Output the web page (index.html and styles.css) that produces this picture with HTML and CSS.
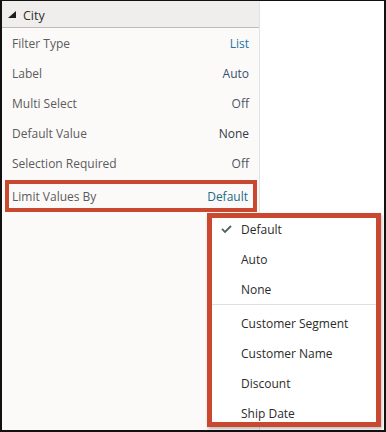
FILE: index.html
```html
<!DOCTYPE html>
<html lang="en">
<head>
<meta charset="utf-8">
<title>City filter properties</title>
<link rel="stylesheet" href="styles.css">
</head>
<body>
<div class="frame">
  <aside class="panel">
    <div class="panel-head">
      <svg class="tri" width="8" height="7" viewBox="0 0 8 7" aria-hidden="true"><polygon points="8,0 8,7 0,7"/></svg>
      <span class="panel-title">City</span>
    </div>
    <div class="props">
      <div class="prop"><span class="key">Filter Type</span><span class="val val-list">List</span></div>
      <div class="prop"><span class="key">Label</span><span class="val val-auto">Auto</span></div>
      <div class="prop"><span class="key">Multi Select</span><span class="val val-off">Off</span></div>
      <div class="prop"><span class="key">Default Value</span><span class="val val-none">None</span></div>
      <div class="prop"><span class="key">Selection Required</span><span class="val val-off">Off</span></div>
      <div class="prop prop-hl"><span class="key">Limit Values By</span><span class="val val-default">Default</span></div>
    </div>
  </aside>
  <div class="menu">
    <ul class="menu-list">
      <li class="item"><span class="mark"><svg width="11" height="8" viewBox="0 0 11 8" aria-hidden="true"><polyline points="1,3.8 4,7 10,1"/></svg></span>Default</li>
      <li class="item"><span class="mark"></span>Auto</li>
      <li class="item"><span class="mark"></span>None</li>
      <li class="sep" role="separator"></li>
      <li class="item"><span class="mark"></span>Customer Segment</li>
      <li class="item"><span class="mark"></span>Customer Name</li>
      <li class="item"><span class="mark"></span>Discount</li>
      <li class="item"><span class="mark"></span>Ship Date</li>
    </ul>
  </div>
</div>
</body>
</html>
```

FILE: styles.css
```css
* { box-sizing: border-box; }

html, body {
  margin: 0;
  padding: 0;
  background: #ffffff;
}

body {
  font-family: "Open Sans", "Noto Sans", sans-serif;
  font-size: 12px;
  color: #2b2b2b;
}

.frame {
  position: relative;
  display: flex;
  width: 386px;
  height: 432px;
  border-top: 1px solid #111;
  border-left: 2px solid #111;
  border-right: 2px solid #111;
  border-bottom: 2px solid #111;
  background: #ffffff;
}

.panel {
  width: 258px;
  flex: none;
  background: #fbfaf9;
  border-right: 1px solid #e4e3e1;
}

.panel-head {
  display: flex;
  align-items: center;
  height: 27px;
  padding-left: 6px;
  background: #efeeec;
  border-bottom: 1px solid #bdbcbb;
}

.tri {
  fill: #1c1c1c;
  flex: none;
}

.panel-title {
  margin-left: 7px;
  padding-top: 3px;
  color: #2e2e2e;
  font-size: 12.5px;
}

.props {
  display: flex;
  flex-direction: column;
}

.prop {
  display: flex;
  align-items: center;
  justify-content: space-between;
  height: 30px;
  padding: 0 10px;
}

.key {
  color: #5b5b5b;
}

.val-list { color: #2274aa; }
.val-auto { color: #36506c; }
.val-off { color: #4d5563; }
.val-none { color: #353b44; }
.val-default { color: #1d6a8a; }

.prop-hl {
  height: 32px;
  margin: 2px 2px 0 3px;
  padding: 0 5px 0 3px;
  border: 4px solid #c9482f;
}

.menu {
  position: absolute;
  left: 205px;
  top: 212px;
  width: 174px;
  height: 214px;
  border: 5px solid #c9482f;
  background: #ffffff;
  overflow: hidden;
  box-shadow: 1px 2px 3px rgba(0, 0, 0, 0.25);
}

.menu-list {
  list-style: none;
  margin: -4px 0 0 0;
  padding: 0;
}

.item {
  display: flex;
  align-items: center;
  height: 30px;
  padding-left: 9px;
  color: #2b2b2b;
}

.mark {
  flex: none;
  width: 20px;
  display: flex;
  align-items: center;
}

.mark polyline {
  fill: none;
  stroke: #4c6554;
  stroke-width: 1.8;
}

.sep {
  height: 1px;
  margin-bottom: 3px;
  background: #dfdfdf;
}
```
